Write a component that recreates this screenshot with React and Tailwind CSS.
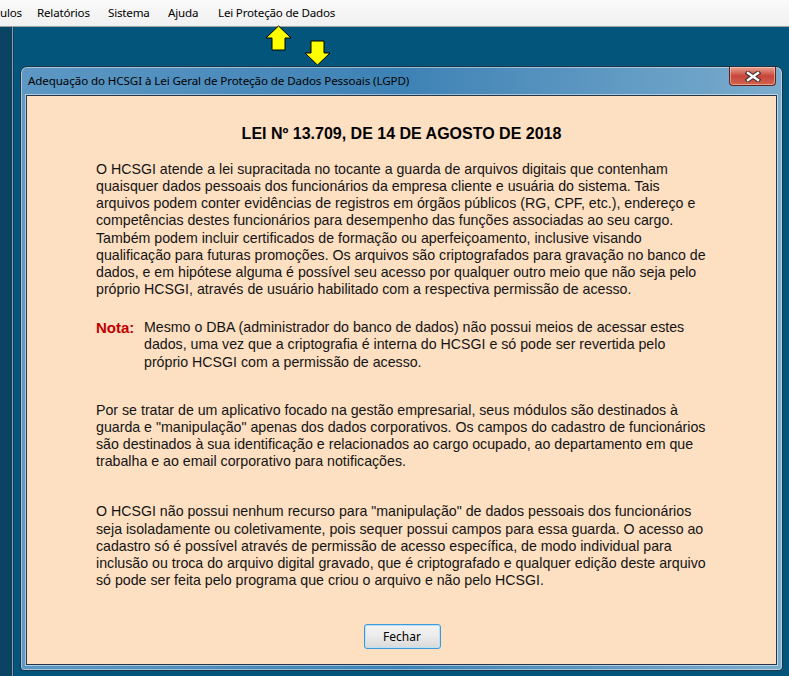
import React from 'react'

const para1 = [
  'O HCSGI atende a lei supracitada no tocante a guarda de arquivos digitais que contenham',
  'quaisquer dados pessoais dos funcionários da empresa cliente e usuária do sistema. Tais',
  'arquivos podem conter evidências de registros em órgãos públicos (RG, CPF, etc.), endereço e',
  'competências destes funcionários para desempenho das funções associadas ao seu cargo.',
  'Também podem incluir certificados de formação ou aperfeiçoamento, inclusive visando',
  'qualificação para futuras promoções. Os arquivos são criptografados para gravação no banco de',
  'dados, e em hipótese alguma é possível seu acesso por qualquer outro meio que não seja pelo',
  'próprio HCSGI, através de usuário habilitado com a respectiva permissão de acesso.',
]

const nota = [
  'Mesmo o DBA (administrador do banco de dados) não possui meios de acessar estes',
  'dados, uma vez que a criptografia é interna do HCSGI e só pode ser revertida pelo',
  'próprio HCSGI com a permissão de acesso.',
]

const para2 = [
  'Por se tratar de um aplicativo focado na gestão empresarial, seus módulos são destinados à',
  'guarda e "manipulação" apenas dos dados corporativos. Os campos do cadastro de funcionários',
  'são destinados à sua identificação e relacionados ao cargo ocupado, ao departamento em que',
  'trabalha e ao email corporativo para notificações.',
]

const para3 = [
  'O HCSGI não possui nenhum recurso para "manipulação" de dados pessoais dos funcionários',
  'seja isoladamente ou coletivamente, pois sequer possui campos para essa guarda. O acesso ao',
  'cadastro só é possível através de permissão de acesso específica, de modo individual para',
  'inclusão ou troca do arquivo digital gravado, que é criptografado e qualquer edição deste arquivo',
  'só pode ser feita pelo programa que criou o arquivo e não pelo HCSGI.',
]

const menu = [
  { label: 'ulos', w: 'w-[37px]' },
  { label: 'Relatórios', w: 'w-[71px]' },
  { label: 'Sistema', w: 'w-[60px]' },
  { label: 'Ajuda', w: 'w-[50px]' },
  { label: 'Lei Proteção de Dados', w: 'w-[140px]' },
]

const Lines = ({ lines }) => (
  <div>
    {lines.map((l, i) => (
      <div key={i} className="whitespace-nowrap leading-[17.15px]">{l}</div>
    ))}
  </div>
)

// yellow pointer arrow, flip for the down one
const Arrow = ({ down, className }) => (
  <svg width="27" height="26" viewBox="0 0 27 26" className={className}>
    <polygon
      points={down
        ? '7,1 20,1 20,13 26,13 13.5,25 1,13 7,13'
        : '13.5,1 26,13 20,13 20,25 7,25 7,13 1,13'}
      fill="#ffff00"
      stroke="#000"
      strokeWidth="1"
    />
  </svg>
)

const CloseGlyph = () => (
  <svg width="16" height="11" viewBox="0 0 16 11">
    <path d="M3 2 L13 9 M13 2 L3 9" stroke="#3a2a2a" strokeWidth="4.5" strokeLinecap="square" />
    <path d="M3 2 L13 9 M13 2 L3 9" stroke="#ffffff" strokeWidth="2.5" strokeLinecap="square" />
  </svg>
)

export default function App() {
  return (
    <div className="relative w-[789px] h-[676px] overflow-hidden bg-[#04557c]">
      {/* menu bar */}
      <div className="h-[26px] flex items-center bg-gradient-to-b from-[#fafafa] to-[#f0f0f0] text-[11.6px] text-black" style={{ fontFamily: '"Noto Sans", sans-serif' }}>
        {menu.map(m => (
          <div key={m.label} className={`${m.w} shrink-0 whitespace-nowrap tracking-[-0.2px]`}>{m.label}</div>
        ))}
      </div>
      <div className="h-px bg-[#a0a0a0]" />

      {/* workspace */}
      <div className="flex h-[649px]">
        <div className="w-[12px] bg-[#0b4462]" />
        <div className="w-px bg-[#8a98a2]" />
        <div className="w-px bg-[#0b4462]" />
        <div className="flex-1 pl-[6px] pt-[39px]">
          <div className="w-[763px] h-[605px] flex flex-col rounded-t-[7px] rounded-b-[4px] border border-[#1e3446] bg-gradient-to-r from-[#5d98c4] via-[#3d82b5] to-[#7aaccd] px-[5px] pb-[5px] shadow-[inset_0_0_0_1px_rgba(255,255,255,0.45)]">
            <div className="h-[28px] flex items-start justify-between">
              <div className="pt-[5px] pl-[2px] text-[11.6px] tracking-[-0.1px] text-black whitespace-nowrap" style={{ fontFamily: '"Noto Sans", sans-serif' }}>
                Adequação do HCSGI à Lei Geral de Proteção de Dados Pessoais (LGPD)
              </div>
              <div className="mr-[1px] w-[47px] h-[19px] flex items-center justify-center rounded-b-[4px] border border-[#5a2520] border-t-0 bg-gradient-to-b from-[#e5a293] via-[#c9443a] to-[#d0644f] shadow-[inset_0_0_0_1px_rgba(255,220,210,0.5)]">
                <CloseGlyph />
              </div>
            </div>
            <div className="flex-1 flex flex-col border border-[#243648] bg-[#fddfc2] shadow-[0_0_0_1px_rgba(255,255,255,0.5)] text-[14.2px] text-[#141414]" style={{ fontFamily: '"Liberation Sans", Arial, sans-serif' }}>
              <div className="pt-[28px] text-center text-[16px] font-bold leading-[19px] text-black">
                LEI Nº 13.709, DE 14 DE AGOSTO DE 2018
              </div>
              <div className="pl-[69px] pt-[18px]">
                <Lines lines={para1} />
                <div className="flex pt-[21px]">
                  <div className="w-[48px] shrink-0 font-bold text-[15px] leading-[17px] text-[#c00000]">Nota:</div>
                  <Lines lines={nota} />
                </div>
                <div className="pt-[31px]">
                  <Lines lines={para2} />
                </div>
                <div className="pt-[33px]">
                  <Lines lines={para3} />
                </div>
              </div>
              <div className="flex justify-center pt-[35px] pl-[1px]">
                <button className="w-[77px] h-[25px] rounded-[3px] border border-[#3c9ad8] bg-gradient-to-b from-[#f4f4f4] via-[#ebebeb] to-[#d9d9d9] shadow-[inset_0_0_0_1px_#b9e1fa] text-[12px] text-black" style={{ fontFamily: '"Noto Sans", sans-serif' }}>
                  Fechar
                </button>
              </div>
            </div>
          </div>
        </div>
      </div>

      {/* pointer arrows over the workspace */}
      <Arrow className="absolute left-[265px] top-[25px]" />
      <Arrow down className="absolute left-[304px] top-[40px]" />
    </div>
  )
}
